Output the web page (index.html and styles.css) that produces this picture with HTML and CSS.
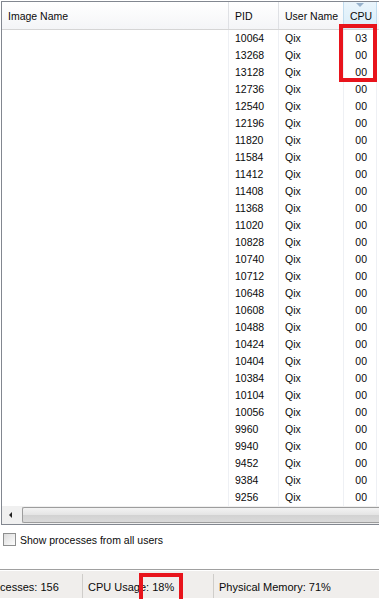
FILE: index.html
```html
<!DOCTYPE html>
<html lang="en">
<head>
  <meta charset="UTF-8">
  <title>Processes</title>
  <link rel="stylesheet" href="styles.css">
</head>
<body>
  <div class="page">
    <div class="listview">
      <div class="header">
        <div class="col">Image Name</div>
        <div class="col">PID</div>
        <div class="col">User Name</div>
        <div class="col sorted">CPU</div>
        <div class="col"></div>
      </div>
      <div class="rows" id="rows"></div>
      <div class="hscroll">
        <div class="arrow"></div>
        <div class="thumb"></div>
      </div>
    </div>

    <label class="check">
      <span class="box"></span>
      Show processes from all users
    </label>

    <div class="statusbar">
      <div class="panel first">Processes: 156</div>
      <div class="panel second">CPU Usage: 18%</div>
      <div class="panel">Physical Memory: 71%</div>
    </div>

    <div class="mark mark-cpu"></div>
    <div class="mark mark-usage"></div>
  </div>

  <script>
    const pids = [10064, 13268, 13128, 12736, 12540, 12196, 11820, 11584, 11412, 11408,
      11368, 11020, 10828, 10740, 10712, 10648, 10608, 10488, 10424, 10404,
      10384, 10104, 10056, 9960, 9940, 9452, 9384, 9256];

    const rows = document.getElementById('rows');
    pids.forEach((pid, i) => {
      const row = document.createElement('div');
      row.className = 'row';
      const cpu = i === 0 ? '03' : '00';
      row.innerHTML = `<div class="cell"></div><div class="cell">${pid}</div><div class="cell">Qix</div><div class="cell num">${cpu}</div><div class="cell"></div>`;
      rows.appendChild(row);
    });
  </script>
</body>
</html>
```

FILE: styles.css
```css
html, body {
  margin: 0;
  overflow: hidden;
}
body {
  font-family: "Liberation Sans", Arial, sans-serif;
  font-size: 10.5px;
  color: #0a0a0a;
  background: #fff;
}
.page {
  position: relative;
  width: 379px;
  height: 599px;
  padding: 1px 0 0 1px;
  box-sizing: border-box;
  overflow: hidden;
}
.listview {
  border: 1px solid #828790;
  border-right: none;
  overflow: hidden;
}
.header,
.row {
  display: grid;
  grid-template-columns: 227px 50px 65px 33px 1fr;
}
.header {
  height: 27px;
  background: linear-gradient(#fff, #f4f5f7);
  border-bottom: 1px solid #d5d5d5;
}
.header .col {
  display: flex;
  align-items: center;
  padding-left: 6px;
  border-right: 1px solid #dfe1e5;
}
.header .sorted {
  position: relative;
  background: linear-gradient(#eaf5fc, #d9edf9);
  border-left: 1px solid #c1dcef;
  border-right: 1px solid #c1dcef;
  margin-left: -1px;
}
.header .sorted::before {
  content: "";
  position: absolute;
  top: 1px;
  left: 12px;
  border-left: 4px solid transparent;
  border-right: 4px solid transparent;
  border-top: 4px solid #97b2cc;
}
.row {
  height: 17px;
}
.cell {
  padding-left: 6px;
  line-height: 17px;
  border-right: 1px solid #eef0f4;
}
.cell.num {
  text-align: right;
  padding-right: 9px;
}
.hscroll {
  display: flex;
  height: 18px;
  background: #f0f0f0;
}
.arrow {
  width: 19px;
  position: relative;
}
.arrow::before {
  content: "";
  position: absolute;
  top: 6px;
  left: 7px;
  border-top: 3px solid transparent;
  border-bottom: 3px solid transparent;
  border-right: 3px solid #222;
}
.thumb {
  flex: 1;
  margin: 1px 0 1px 1px;
  border: 1px solid #9d9d9d;
  border-right: none;
  border-radius: 2px 0 0 2px;
  background: linear-gradient(#f3f3f3, #e4e4e4 50%, #d2d2d2 51%, #dadada);
}
.check {
  display: flex;
  align-items: center;
  gap: 4px;
  margin: 8px 0 0 2px;
  height: 13px;
}
.box {
  width: 11px;
  height: 11px;
  border: 1px solid #8e8f8f;
  background: linear-gradient(135deg, #dcdcdc, #fdfdfd);
}
.statusbar {
  display: flex;
  margin: 23px 0 0 -1px;
  height: 28px;
  font-size: 11px;
  background: #f0eeec;
  border-top: 1px solid #a0a0a0;
  box-shadow: inset 0 1px 0 #fff;
}
.panel {
  display: flex;
  align-items: center;
  margin-top: 4px;
  padding: 2px 0 0 5px;
  border-right: 1px solid #cfcdca;
}
.panel.first {
  margin-left: -17px;
  width: 99px;
  padding-left: 0;
}
.panel.second {
  width: 125px;
}
.panel:last-child {
  border-right: none;
}
.mark {
  position: absolute;
  border: 4px solid #e8141c;
}
.mark-cpu {
  left: 339px;
  top: 24px;
  width: 30px;
  height: 50px;
}
.mark-usage {
  left: 139px;
  top: 573px;
  width: 36px;
  height: 30px;
}
```
